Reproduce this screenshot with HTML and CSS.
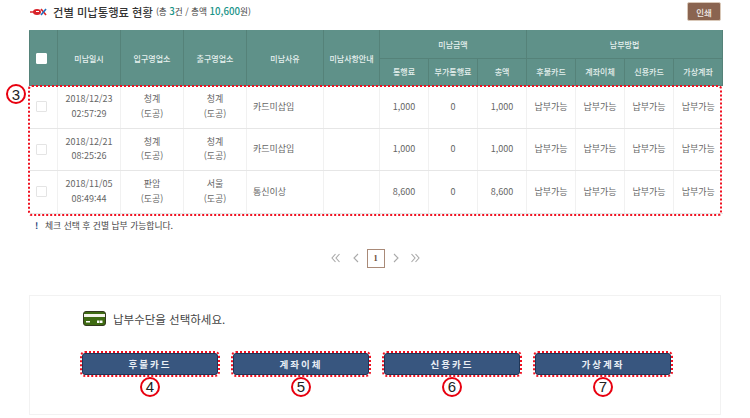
FILE: index.html
```html
<!DOCTYPE html>
<html lang="ko">
<head>
<meta charset="utf-8">
<title>건별 미납통행료 현황</title>
<link rel="stylesheet" href="styles.css">
</head>
<body>
<main class="page">
  <header class="head">
    <svg class="logo" width="18" height="8" viewBox="0 0 18 8"><ellipse cx="7" cy="4" rx="4" ry="3" fill="#d8232a"/><path d="M0 4h7" stroke="#d8232a" stroke-width="1.5"/><path d="M11 1l5 6" stroke="#d8232a" stroke-width="1.6"/><path d="M16 1l-5 6" stroke="#1f6fc0" stroke-width="1.6"/><path d="M6 3.500h3" stroke="#fff" stroke-width="1"/></svg>
    <h1 class="title">건별 미납통행료 현황</h1>
    <span class="sum">(총 <b>3</b>건 / 총액 <b>10,600</b>원)</span>
    <button class="print">인쇄</button>
  </header>

  <div class="tablewrap">
    <table class="grid">
      <colgroup>
        <col class="c-chk"><col class="c-63"><col class="c-63"><col class="c-63"><col class="c-77"><col class="c-56">
        <col class="c-49"><col class="c-49"><col class="c-49"><col class="c-49"><col class="c-49"><col class="c-49"><col class="c-49">
      </colgroup>
      <thead>
        <tr>
          <th rowspan="2"><span class="chk chk-on"></span></th>
          <th rowspan="2">미납일시</th>
          <th rowspan="2">입구영업소</th>
          <th rowspan="2">출구영업소</th>
          <th rowspan="2">미납사유</th>
          <th rowspan="2">미납사항안내</th>
          <th colspan="3">미납금액</th>
          <th colspan="4">납부방법</th>
        </tr>
        <tr>
          <th>통행료</th><th>부가통행료</th><th>총액</th>
          <th>후불카드</th><th>계좌이체</th><th>신용카드</th><th>가상계좌</th>
        </tr>
      </thead>
      <tbody>
        <tr>
          <td><span class="chk"></span></td>
          <td class="two">2018/12/23<br>02:57:29</td>
          <td class="two">청계<br>(도공)</td>
          <td class="two">청계<br>(도공)</td>
          <td class="left">카드미삽입</td>
          <td></td>
          <td>1,000</td><td>0</td><td>1,000</td>
          <td>납부가능</td><td>납부가능</td><td>납부가능</td><td>납부가능</td>
        </tr>
        <tr>
          <td><span class="chk"></span></td>
          <td class="two">2018/12/21<br>08:25:26</td>
          <td class="two">청계<br>(도공)</td>
          <td class="two">청계<br>(도공)</td>
          <td class="left">카드미삽입</td>
          <td></td>
          <td>1,000</td><td>0</td><td>1,000</td>
          <td>납부가능</td><td>납부가능</td><td>납부가능</td><td>납부가능</td>
        </tr>
        <tr>
          <td><span class="chk"></span></td>
          <td class="two">2018/11/05<br>08:49:44</td>
          <td class="two">판암<br>(도공)</td>
          <td class="two">서울<br>(도공)</td>
          <td class="left">통신이상</td>
          <td></td>
          <td>8,600</td><td>0</td><td>8,600</td>
          <td>납부가능</td><td>납부가능</td><td>납부가능</td><td>납부가능</td>
        </tr>
      </tbody>
    </table>
    <div class="mark-box"></div>
    <span class="num num-3">3</span>
  </div>

  <p class="note"><b class="bang">!</b>체크 선택 후 건별 납부 가능합니다.</p>

  <nav class="pager">
    <svg class="pg pg-first" width="9" height="10" viewBox="0 0 9 10"><path d="M4.500 1L1 5l3.500 4M8.500 1L5 5l3.500 4"/></svg>
    <svg class="pg" width="6" height="10" viewBox="0 0 6 10"><path d="M5 1L1 5l4 4"/></svg>
    <span class="cur">1</span>
    <svg class="pg" width="6" height="10" viewBox="0 0 6 10"><path d="M1 1l4 4-4 4"/></svg>
    <svg class="pg pg-last" width="9" height="10" viewBox="0 0 9 10"><path d="M.5 1L4 5 .5 9M4.500 1L8 5 4.500 9"/></svg>
  </nav>

  <section class="pay">
    <div class="pay-title">
      <svg width="23" height="15" viewBox="0 0 23 15"><rect x="0.500" y="0.500" width="22" height="14" rx="2.500" fill="#3f6b12" stroke="#33391f"/><rect x="1" y="3" width="21" height="3" fill="#f4f4ea"/><rect x="3" y="10" width="4" height="1.500" fill="#fff"/><rect x="14" y="9.500" width="2.500" height="2.500" fill="#fff"/><rect x="17" y="9.500" width="2.500" height="2.500" fill="#fff"/></svg>
      <span>납부수단을 선택하세요.</span>
    </div>
    <div class="btns">
      <div class="btn-item"><button class="pay-btn">후불카드</button><span class="num">4</span></div>
      <div class="btn-item"><button class="pay-btn">계좌이체</button><span class="num">5</span></div>
      <div class="btn-item"><button class="pay-btn">신용카드</button><span class="num">6</span></div>
      <div class="btn-item"><button class="pay-btn">가상계좌</button><span class="num">7</span></div>
    </div>
  </section>
</main>
</body>
</html>
```
FILE: styles.css
```css
* { box-sizing: border-box; }
html, body { margin: 0; padding: 0; background: #fff; }
body { width: 750px; height: 418px; overflow: hidden; font-family: "Noto Sans CJK KR", "Noto Sans", sans-serif; color: #555; }
.page { padding: 0 29px; }

.head { display: flex; align-items: center; height: 30px; padding-bottom: 8px; padding-top: 1px; }
.logo { margin-right: 5px; margin-left: 1px; }
.title { margin: 0 3px 0 0; font-size: 11.300px; font-weight: 500; color: #333; line-height: 18px; }
.sum { font-size: 8.700px; color: #444; line-height: 18px; }
.sum b { font-weight: 500; color: #1a9488; font-size: 9.700px; }
.print { margin-left: auto; width: 34px; height: 19px; padding: 0; border: 1px solid #d9c8b8; border-radius: 2px; background: #8a6450; color: #f2ece8; font: 500 8.500px "Noto Sans CJK KR", sans-serif; }

.tablewrap { position: relative; width: 692px; }
.grid { width: 692px; table-layout: fixed; border-collapse: collapse; font-size: 9px; }
.c-chk { width: 28px; }
.c-63 { width: 63px; }
.c-77 { width: 77px; }
.c-56 { width: 56px; }
.c-49 { width: 49px; }
.grid th { height: 27.500px; padding: 0; background: #5f9189; border: 1px solid #558279; color: #e6f0ee; font-weight: 500; font-size: 8px; text-align: center; white-space: nowrap; }
.grid thead tr:first-child th { border-top-color: #5f9189; }
.grid td { height: 42.500px; padding: 0; border: 1px solid #f1f1f1; border-bottom: 1px solid #e6e6e6; color: #666; text-align: center; font-size: 9px; line-height: 14.500px; white-space: nowrap; }
.grid td:first-child { border-left: 0; }
.grid td:last-child { border-right: 0; }
.grid td.left { text-align: left; padding-left: 6px; }
.chk { display: block; width: 11px; height: 11px; margin: 0 0 0 6px; background: #fff; border: 1px solid #e4e4e4; border-radius: 1px; }
.chk-on { border-color: #fff; }

.mark-box { position: absolute; left: -1px; top: 55px; width: 694px; height: 131px; border: 2px dotted #f01020; border-radius: 4px; pointer-events: none; }
.num { display: flex; align-items: center; justify-content: center; width: 20px; height: 20px; border: 2px solid #e8000f; border-radius: 50%; background: #fff; color: #222; font: 15px "Liberation Sans", sans-serif; }
.num-3 { position: absolute; left: -23px; top: 54px; }

.note { margin: 5px 0 0; padding-left: 6px; height: 16px; font-size: 8.800px; line-height: 14px; color: #444; display: flex; }
.bang { width: 10px; color: #1f3f7a; font-weight: 700; }

.pager { display: flex; align-items: center; justify-content: center; gap: 8px; margin-top: 14px; height: 19px; }
.pg { fill: none; stroke: #a9a9a9; stroke-width: 1.100; }
.pg-first { margin-right: 5px; }
.pg-last { margin-left: 4px; }
.cur { width: 18px; height: 19px; display: flex; align-items: center; justify-content: center; border: 1px solid #a98a78; color: #6b4a38; font: 700 8.500px "Liberation Serif", serif; }

.pay { margin-top: 27px; width: 692px; height: 120px; border: 1px solid #f2f2f2; padding: 14px 0 0 50px; }
.pay-title { display: flex; align-items: center; gap: 7px; height: 18px; margin-left: 3px; font-size: 11.500px; color: #444; }
.btns { display: flex; gap: 11px; margin-top: 23px; }
.btn-item { width: 140px; }
.pay-btn { display: block; width: 136px; height: 22px; margin: 2px; padding: 0; border: 1px solid #1f3556; border-radius: 3px; background: #38567f; outline: 2px dotted #f01020; color: #e9eef5; font: 700 9.500px "Noto Sans CJK KR", sans-serif; letter-spacing: 2px; }
.btn-item .num { margin: 0 auto; }
```
